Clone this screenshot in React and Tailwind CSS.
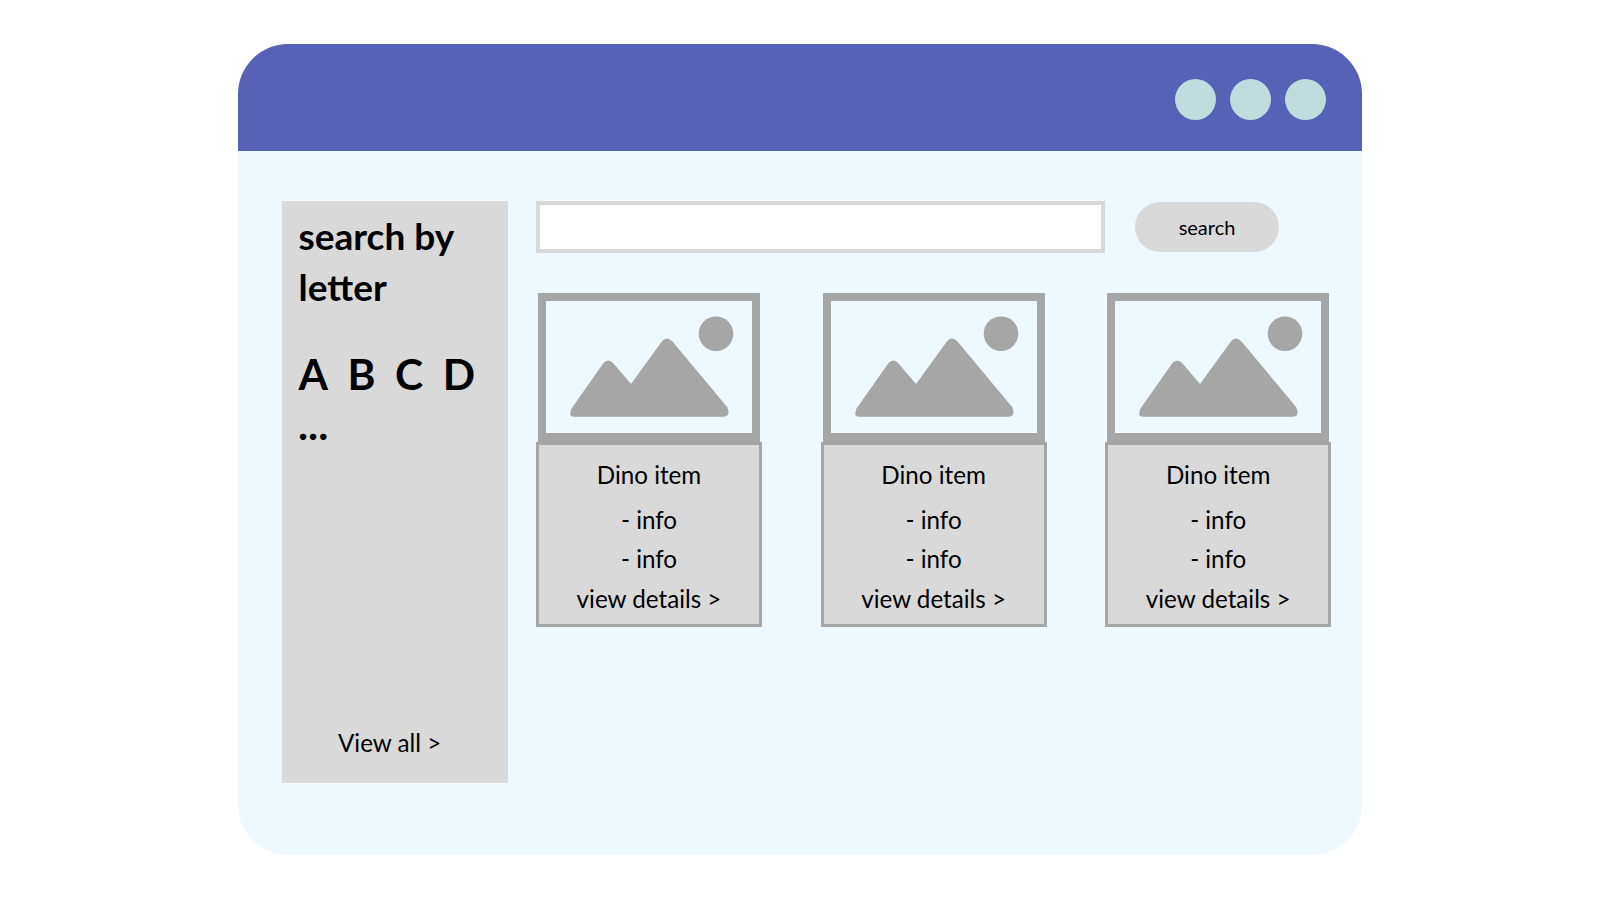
const cards = [1, 2, 3]

function PictureFrame() {
    return (
        <div className="mx-[2px] w-[222px] h-[149px] border-x-8 border-t-8 border-b-[9px] border-[#a6a6a6]">
            <svg width="206" height="132" viewBox="8 8 206 132" className="block">
                <circle cx="178" cy="40.7" r="17.3" fill="#a6a6a6" />
                <path
                    d="M37 123.7 Q30.5 123.7 32.7 118.7 Q32.5 117 33.7 115.3 L65.3 70.3 Q70.3 64.5 75.3 70.3 L93 91 L123.7 48.7 Q128.7 42.5 134.7 48.7 L189.3 114.3 Q193 123.7 185.3 123.7 Z"
                    fill="#a6a6a6"
                />
            </svg>
        </div>
    )
}

function DinoCard() {
    return (
        <div className="w-[226px]">
            <PictureFrame />
            <div className="h-[185px] border-[3px] border-[#a6a6a6] bg-[#d9d9d9] flex flex-col items-center text-[24.2px] text-black">
                <p className="leading-[30px] mt-[15px]">Dino item</p>
                <p className="leading-[30px] mt-[15px]">- info</p>
                <p className="leading-[30px] mt-[9px]">- info</p>
                <p className="leading-[30px] mt-[10px]">view details &gt;</p>
            </div>
        </div>
    )
}

export default function App() {
    return (
        <div className="w-[1600px] h-[900px] bg-white pt-[44px] pl-[238px] font-['Lato',sans-serif]">
            <div className="w-[1124px] h-[811px] rounded-[50px] overflow-hidden bg-[#edf9fe] flex flex-col">
                <div className="h-[107px] pt-[3px] bg-[#5762b6] flex items-center justify-end gap-[14px] pr-[36px]">
                    <div className="w-[41px] h-[41px] rounded-full bg-[#c1dbde]"></div>
                    <div className="w-[41px] h-[41px] rounded-full bg-[#c1dbde]"></div>
                    <div className="w-[41px] h-[41px] rounded-full bg-[#c1dbde]"></div>
                </div>

                <div className="flex pl-[44px] pt-[50px]">
                    <div className="w-[226px] h-[582px] bg-[#d9d9d9] flex flex-col pl-[16px] text-black">
                        <h2 className="text-[37px] leading-[51px] font-bold mt-[9px] ml-[0.5px] w-[170px]">search by letter</h2>
                        <div className="text-[42.5px] leading-[60px] font-bold mt-[32px] ml-[0.5px] flex gap-[19.5px]">
                            <span>A</span>
                            <span>B</span>
                            <span>C</span>
                            <span>D</span>
                        </div>
                        <div className="text-[42.5px] leading-[60px] font-bold -mt-[10px]">...</div>
                        <p className="mt-auto mb-[25px] ml-[40px] text-[24.2px] leading-[30px]">View all &gt;</p>
                    </div>

                    <div className="ml-[28px]">
                        <div className="flex items-center">
                            <div className="w-[569px] h-[52px] border-4 border-[#d9d9d9] bg-white"></div>
                            <div className="w-[144px] h-[50px] ml-[30px] rounded-full bg-[#d9d9d9] flex items-center justify-center text-[20px] text-black">search</div>
                        </div>
                        <div className="flex gap-[58.6px] mt-[40px]">
                            {cards.map((c) => <DinoCard key={c} />)}
                        </div>
                    </div>
                </div>
            </div>
        </div>
    )
}
